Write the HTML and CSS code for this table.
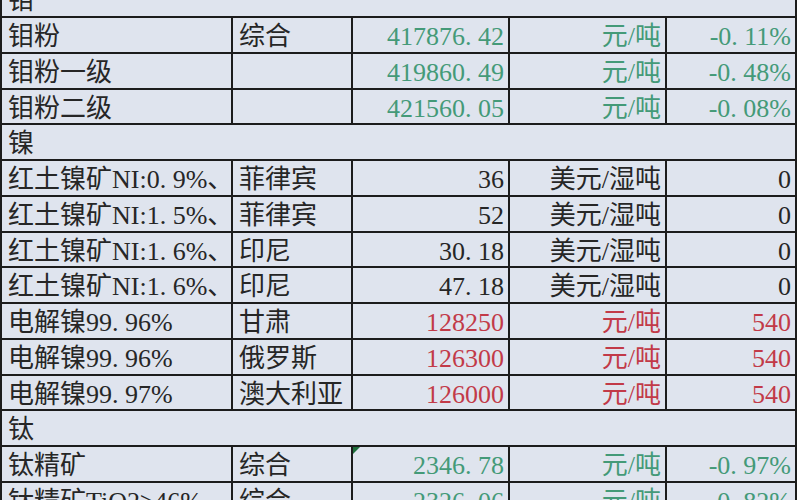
FILE: index.html
```html
<!DOCTYPE html>
<html lang="zh-CN">
<head>
<meta charset="utf-8">
<title>金属价格表</title>
<link rel="stylesheet" href="styles.css">
</head>
<body>
<div class="sheet">
  <div class="row"><div class="cell group">钼</div></div>
  <div class="row">
    <div class="cell">钼粉</div><div class="cell">综合</div>
    <div class="cell num up">417876<span class="dot">.</span>42</div><div class="cell num up">元/吨</div><div class="cell num up">-0<span class="dot">.</span>11%</div>
  </div>
  <div class="row">
    <div class="cell">钼粉一级</div><div class="cell"></div>
    <div class="cell num up">419860<span class="dot">.</span>49</div><div class="cell num up">元/吨</div><div class="cell num up">-0<span class="dot">.</span>48%</div>
  </div>
  <div class="row">
    <div class="cell">钼粉二级</div><div class="cell"></div>
    <div class="cell num up">421560<span class="dot">.</span>05</div><div class="cell num up">元/吨</div><div class="cell num up">-0<span class="dot">.</span>08%</div>
  </div>
  <div class="row"><div class="cell group">镍</div></div>
  <div class="row">
    <div class="cell">红土镍矿NI:0<span class="dot">.</span>9%、</div><div class="cell">菲律宾</div>
    <div class="cell num">36</div><div class="cell num">美元/湿吨</div><div class="cell num">0</div>
  </div>
  <div class="row">
    <div class="cell">红土镍矿NI:1<span class="dot">.</span>5%、</div><div class="cell">菲律宾</div>
    <div class="cell num">52</div><div class="cell num">美元/湿吨</div><div class="cell num">0</div>
  </div>
  <div class="row">
    <div class="cell">红土镍矿NI:1<span class="dot">.</span>6%、</div><div class="cell">印尼</div>
    <div class="cell num">30<span class="dot">.</span>18</div><div class="cell num">美元/湿吨</div><div class="cell num">0</div>
  </div>
  <div class="row">
    <div class="cell">红土镍矿NI:1<span class="dot">.</span>6%、</div><div class="cell">印尼</div>
    <div class="cell num">47<span class="dot">.</span>18</div><div class="cell num">美元/湿吨</div><div class="cell num">0</div>
  </div>
  <div class="row">
    <div class="cell">电解镍99<span class="dot">.</span>96%</div><div class="cell">甘肃</div>
    <div class="cell num down">128250</div><div class="cell num down">元/吨</div><div class="cell num down">540</div>
  </div>
  <div class="row">
    <div class="cell">电解镍99<span class="dot">.</span>96%</div><div class="cell">俄罗斯</div>
    <div class="cell num down">126300</div><div class="cell num down">元/吨</div><div class="cell num down">540</div>
  </div>
  <div class="row">
    <div class="cell">电解镍99<span class="dot">.</span>97%</div><div class="cell">澳大利亚</div>
    <div class="cell num down">126000</div><div class="cell num down">元/吨</div><div class="cell num down">540</div>
  </div>
  <div class="row"><div class="cell group">钛</div></div>
  <div class="row">
    <div class="cell">钛精矿</div><div class="cell">综合</div>
    <div class="cell num up flagged">2346<span class="dot">.</span>78</div><div class="cell num up">元/吨</div><div class="cell num up">-0<span class="dot">.</span>97%</div>
  </div>
  <div class="row">
    <div class="cell">钛精矿TiO2≥46%</div><div class="cell">综合</div>
    <div class="cell num up">2326<span class="dot">.</span>06</div><div class="cell num up">元/吨</div><div class="cell num up">-0<span class="dot">.</span>82%</div>
  </div>
</div>
</body>
</html>
```
FILE: styles.css
```css
html, body {
  margin: 0;
  padding: 0;
  background: #ffffff;
  overflow: hidden;
}
.sheet {
  width: 795px;
  margin-top: -17.8px;
  border-left: 2px solid #1c1c1c;
  background: #dfe4ee;
  font-family: "Liberation Serif", "Noto Sans CJK SC", serif;
  font-size: 26px;
  color: #262626;
}
.row {
  display: grid;
  grid-template-columns: 231px 120px 157px 157px 130px;
  height: 35.77px;
  box-sizing: border-box;
  border-bottom: 2px solid #1c1c1c;
}
.cell {
  box-sizing: border-box;
  border-right: 2px solid #1c1c1c;
  padding: 2px 4px 0 6px;
  line-height: 33.77px;
  white-space: nowrap;
  overflow: hidden;
  position: relative;
}
.cell.group {
  grid-column: 1 / -1;
}
.num {
  text-align: right;
  padding-right: 4px;
}
.dot {
  display: inline-block;
  width: 0.5em;
  text-align: left;
}
.up {
  color: #449a78;
}
.down {
  color: #c23a48;
}
.flagged::before {
  content: "";
  position: absolute;
  left: 0;
  top: 0;
  border-top: 7px solid #1f6e3c;
  border-right: 7px solid transparent;
}
```
